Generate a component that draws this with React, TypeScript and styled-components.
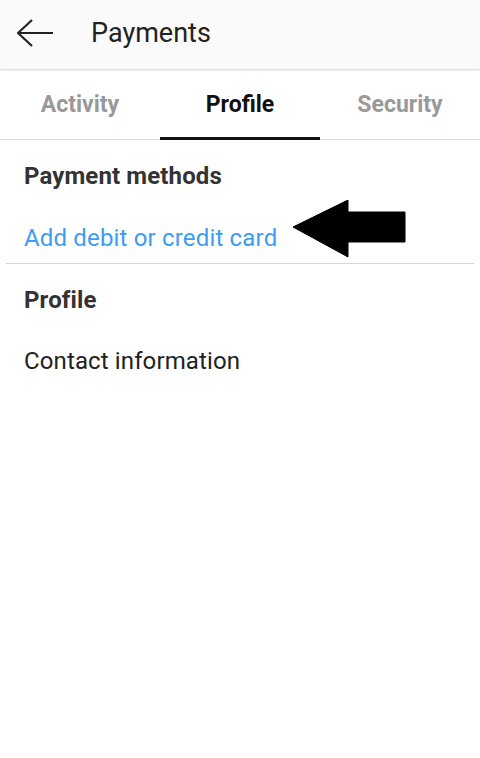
import React from 'react';
import styled, { createGlobalStyle } from 'styled-components';

const GlobalStyle = createGlobalStyle`
    html, body {
        margin: 0;
        padding: 0;
        background: #fff;
        font-family: Roboto, "Liberation Sans", sans-serif;
    }
`;

const tabs = ['Activity', 'Profile', 'Security'];

const App: React.FC = () => {
    const active = 'Profile';

    return (
        <Page>
            <GlobalStyle />
            <Header>
                <BackButton aria-label="Back">
                    <svg width="40" height="30" viewBox="0 0 40 30" fill="none">
                        <path d="M1 15H36M15 2L1 15L15 28" stroke="#222" strokeWidth="2.2" />
                    </svg>
                </BackButton>
                <Title>Payments</Title>
            </Header>
            <TabBar>
                {tabs.map((t) => (
                    <Tab key={t} active={t === active}>{t}</Tab>
                ))}
            </TabBar>
            <SectionTitle height={72}>Payment methods</SectionTitle>
            <LinkRow>
                <LinkText>Add debit or credit card</LinkText>
                <Pointer width="113" height="58" viewBox="0 0 113 58">
                    <polygon
                        points="0,27 55,0 55,12 112,12 112,42 55,42 55,57"
                        fill="#000"
                        strokeLinejoin="round"
                        stroke="#000"
                        strokeWidth="1"
                    />
                </Pointer>
            </LinkRow>
            <Divider />
            <SectionTitle height={72}>Profile</SectionTitle>
            <ItemRow>Contact information</ItemRow>
        </Page>
    );
};

export default App;

const Page = styled.div`
    width: 480px;
    min-height: 758px;
    background: #fff;
`;

const Header = styled.header`
    height: 69px;
    display: flex;
    align-items: center;
    padding-bottom: 3px;
    box-sizing: border-box;
    background: #fafafa;
    box-shadow: 0 1px 2px rgba(0, 0, 0, 0.18);
    position: relative;
    z-index: 1;
`;

const BackButton = styled.button`
    border: none;
    background: none;
    padding: 0;
    margin-left: 17px;
    width: 40px;
    height: 30px;
    display: flex;
    cursor: pointer;
`;

const Title = styled.h1`
    margin: 0 0 0 34px;
    font-size: 27px;
    font-weight: 400;
    color: #222;
`;

const TabBar = styled.nav`
    display: grid;
    grid-template-columns: repeat(3, 1fr);
    height: 71px;
    border-bottom: 1px solid #dcdcdc;
    box-sizing: border-box;
`;

const Tab = styled.div<{ active: boolean }>`
    display: flex;
    align-items: center;
    justify-content: center;
    font-size: 23px;
    font-weight: 700;
    color: ${({ active }) => (active ? '#111' : '#999')};
    border-bottom: 3px solid ${({ active }) => (active ? '#111' : 'transparent')};
    margin-bottom: -1px;
    padding-top: 3px;
`;

const SectionTitle = styled.h2<{ height: number }>`
    margin: 0;
    height: ${({ height }) => height}px;
    display: flex;
    align-items: center;
    padding: 0 24px;
    font-size: 24px;
    font-weight: 700;
    letter-spacing: 0.12px;
    color: #333;
`;

const LinkRow = styled.div`
    position: relative;
    height: 51px;
    display: flex;
    align-items: center;
    padding: 0 24px;
`;

const LinkText = styled.a`
    font-size: 24px;
    letter-spacing: 0.17px;
    color: #3d9cf0;
    text-decoration: none;
    cursor: pointer;
`;

const Pointer = styled.svg`
    position: absolute;
    left: 293px;
    top: -12px;
`;

const Divider = styled.hr`
    margin: 0 6px;
    border: none;
    border-top: 1px solid #d4d4dc;
`;

const ItemRow = styled.div`
    height: 49px;
    display: flex;
    align-items: center;
    padding: 0 24px;
    font-size: 24px;
    letter-spacing: 0.12px;
    color: #222;
`;
